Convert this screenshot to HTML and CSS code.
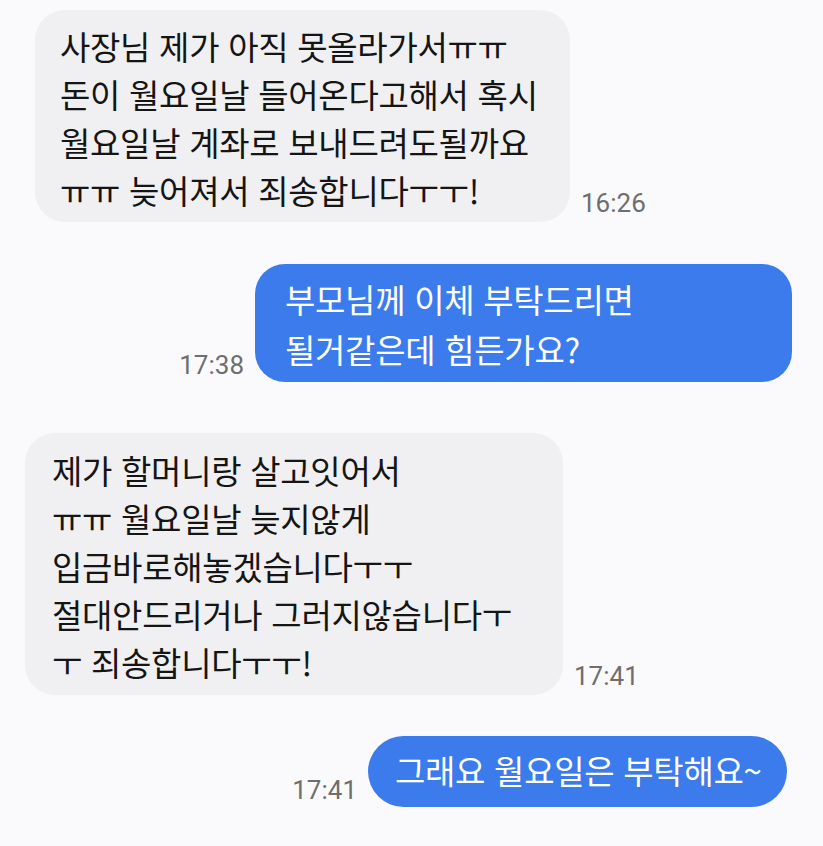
FILE: index.html
```html
<!DOCTYPE html>
<html lang="ko">
<head>
  <meta charset="UTF-8">
  <meta name="viewport" content="width=device-width, initial-scale=1.0">
  <title>대화</title>
  <link rel="stylesheet" href="styles.css">
</head>
<body>

  <div class="chat">
    <!-- 받은 메시지 -->
    <div class="row row-in first">
      <div class="bubble in b1">사장님 제가 아직 못올라가서ㅠㅠ<br>돈이 월요일날 들어온다고해서 혹시<br>월요일날 계좌로 보내드려도될까요<br>ㅠㅠ 늦어져서 죄송합니다ㅜㅜ!</div>
      <span class="time">16:26</span>
    </div>

    <!-- 보낸 메시지 -->
    <div class="row row-out second">
      <span class="time">17:38</span>
      <div class="bubble out b2">부모님께 이체 부탁드리면<br>될거같은데 힘든가요?</div>
    </div>

    <div class="row row-in third">
      <div class="bubble in b3">제가 할머니랑 살고잇어서<br>ㅠㅠ 월요일날 늦지않게<br>입금바로해놓겠습니다ㅜㅜ<br>절대안드리거나 그러지않습니다ㅜ<br>ㅜ 죄송합니다ㅜㅜ!</div>
      <span class="time">17:41</span>
    </div>

    <div class="row row-out fourth">
      <span class="time">17:41</span>
      <div class="bubble out b4">그래요 월요일은 부탁해요~</div>
    </div>
  </div>

</body>
</html>
```

FILE: styles.css
```css
/* 기본 */
body {
  margin: 0;
  background-color: #fafafc;
  font-family: 'Noto Sans CJK KR', 'Noto Sans', sans-serif;
}

.chat {
  display: flex;
  flex-direction: column;
  width: 823px;
  height: 846px;
  overflow: hidden;
}

/* 줄 */
.row {
  display: flex;
  align-items: flex-end;
  gap: 11px;
}

.row-out {
  justify-content: flex-end;
}

.first {
  margin: 10px 0 0 35px;
}

.second {
  margin: 42px 31px 0 0;
}

.third {
  margin: 51px 0 0 25px;
}

.fourth {
  margin: 41px 36px 0 0;
}

/* 말풍선 */
.bubble {
  box-sizing: border-box;
  font-size: 33px;
  letter-spacing: -0.3px;
  line-height: 48px;
  white-space: nowrap;
  border-radius: 30px;
}

.in {
  background-color: #f0f0f2;
  color: #151515;
}

.out {
  background-color: #3b7beb;
  color: #fff;
}

.b1 {
  width: 535px;
  height: 212px;
  padding: 12px 20px 0 25px;
}

.b2 {
  width: 537px;
  height: 118px;
  padding: 10px 20px 0 30px;
  line-height: 50px;
}

.b3 {
  width: 538px;
  height: 262px;
  padding: 13px 20px 0 27px;
}

.b4 {
  width: 419px;
  height: 71px;
  padding: 10px 16px 0 27px;
  border-radius: 36px;
}

/* 시간 */
.time {
  font-family: 'Roboto', sans-serif;
  font-size: 26px;
  line-height: 26px;
  color: #6e6e6e;
  margin-bottom: 6px;
}

.row-out .time {
  margin-bottom: 4px;
}
```
